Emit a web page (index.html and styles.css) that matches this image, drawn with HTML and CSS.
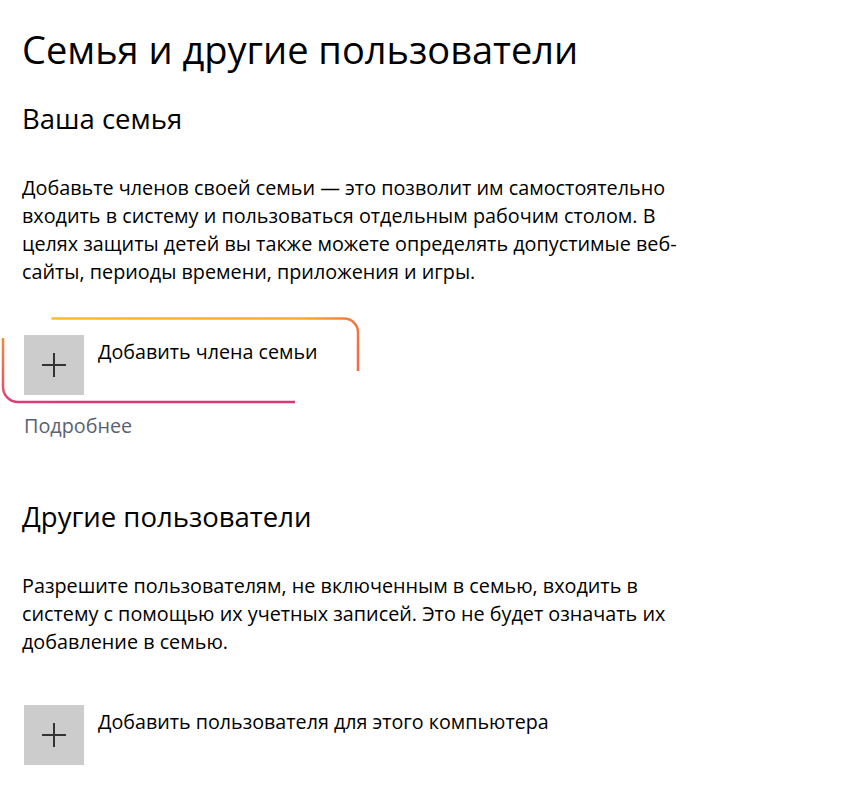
FILE: index.html
```html
<!DOCTYPE html>
<html lang="ru">
<head>
<meta charset="utf-8">
<title>Семья и другие пользователи</title>
<link rel="stylesheet" href="styles.css">
</head>
<body>
<main class="page">
  <h1 class="title">Семья и другие пользователи</h1>

  <section class="section">
    <h2 class="subtitle">Ваша семья</h2>
    <p class="desc">Добавьте членов своей семьи — это позволит им самостоятельно входить в систему и пользоваться отдельным рабочим столом. В целях защиты детей вы также можете определять допустимые веб-сайты, периоды времени, приложения и игры.</p>
    <div class="add-row">
      <span class="add-tile">
        <svg class="plus" width="24" height="24" viewBox="0 0 24 24"><path d="M12 0V24M0 12H24" stroke="#333" stroke-width="2" fill="none"/></svg>
      </span>
      <span class="add-label">Добавить члена семьи</span>
      <svg class="annot" width="390" height="100" viewBox="0 0 390 100">
        <defs>
          <linearGradient id="gTop" gradientUnits="userSpaceOnUse" x1="50" y1="8" x2="358" y2="62">
            <stop offset="0" stop-color="#fcbd1f"/>
            <stop offset="0.8" stop-color="#fda82a"/>
            <stop offset="1" stop-color="#f86a4a"/>
          </linearGradient>
          <linearGradient id="gBot" gradientUnits="userSpaceOnUse" x1="3" y1="28" x2="60" y2="92">
            <stop offset="0" stop-color="#f8893a"/>
            <stop offset="0.6" stop-color="#dd3f78"/>
            <stop offset="1" stop-color="#d83a78"/>
          </linearGradient>
        </defs>
        <path d="M51.5 8.5H344A14 14 0 0 1 358 22.5V61" stroke="url(#gTop)" stroke-width="2.5" fill="none"/>
        <path d="M3 28V77A15 15 0 0 0 18 92H295" stroke="url(#gBot)" stroke-width="2.5" fill="none"/>
      </svg>
    </div>
    <a class="more" href="#">Подробнее</a>
  </section>

  <section class="section section-other">
    <h2 class="subtitle">Другие пользователи</h2>
    <p class="desc">Разрешите пользователям, не включенным в семью, входить в систему с помощью их учетных записей. Это не будет означать их добавление в семью.</p>
    <div class="add-row">
      <span class="add-tile">
        <svg class="plus" width="24" height="24" viewBox="0 0 24 24"><path d="M12 0V24M0 12H24" stroke="#333" stroke-width="2" fill="none"/></svg>
      </span>
      <span class="add-label">Добавить пользователя для этого компьютера</span>
    </div>
  </section>
</main>
</body>
</html>
```

FILE: styles.css
```css
html, body {
  margin: 0;
  padding: 0;
  background: #ffffff;
}

body {
  font-family: "Open Sans", "Noto Sans", sans-serif;
  color: #000000;
}

.page {
  padding: 24px 0 0 22px;
}

.title {
  margin: 0;
  font-size: 38px;
  line-height: 50px;
  font-weight: 400;
}

.section {
  display: flex;
  flex-direction: column;
  align-items: flex-start;
}

.subtitle {
  margin: 28px 0 0;
  font-size: 27.5px;
  line-height: 34px;
  font-weight: 400;
}

.section-other .subtitle {
  margin-top: 60px;
}

.desc {
  margin: 38px 0 0;
  width: 668px;
  font-size: 19.8px;
  line-height: 28px;
}

.add-row {
  position: relative;
  display: flex;
  align-items: flex-start;
  gap: 14px;
  margin: 49px 0 0 2px;
}

.add-tile {
  width: 60px;
  height: 60px;
  background: #cccccc;
  display: flex;
  align-items: center;
  justify-content: center;
}

.plus {
  display: block;
}

.add-label {
  padding-top: 3px;
  font-size: 19.7px;
  line-height: 28px;
}

.annot {
  position: absolute;
  left: -24px;
  top: -25px;
  pointer-events: none;
}

.more {
  margin: 17px 0 0 2px;
  font-size: 19.8px;
  line-height: 28px;
  color: #5a6270;
  text-decoration: none;
}
```
